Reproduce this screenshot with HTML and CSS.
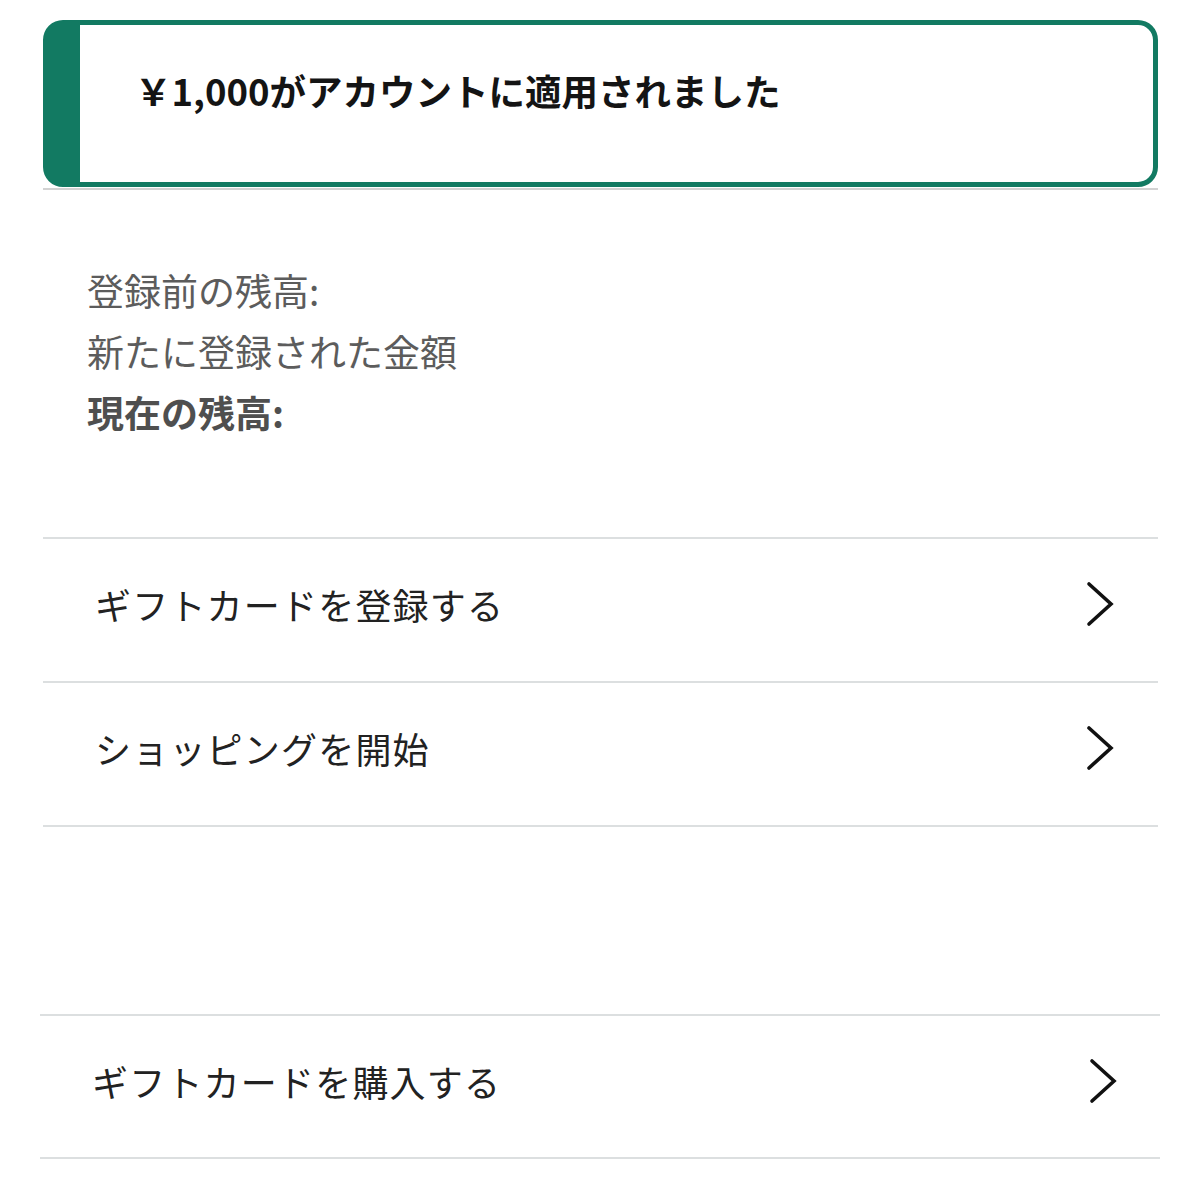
FILE: index.html
```html
<!DOCTYPE html>
<html lang="ja">
<head>
<meta charset="utf-8">
<title>ギフトカード</title>
<link rel="stylesheet" href="styles.css">
</head>
<body>
<div class="page">
  <div class="alert">
    <p class="alert-text">￥1,000がアカウントに適用されました</p>
  </div>
  <div class="rule"></div>

  <div class="balance">
    <p class="bal-line">登録前の残高:</p>
    <p class="bal-line">新たに登録された金額</p>
    <p class="bal-line bal-strong">現在の残高:</p>
  </div>

  <div class="list">
    <div class="row">
      <span class="row-label">ギフトカードを登録する</span>
      <svg class="chev" width="28" height="46" viewBox="0 0 28 46"><polyline points="3,3 25,23 3,43" fill="none" stroke="#111" stroke-width="3.6" stroke-linecap="round" stroke-linejoin="miter"/></svg>
    </div>
    <div class="row">
      <span class="row-label">ショッピングを開始</span>
      <svg class="chev" width="28" height="46" viewBox="0 0 28 46"><polyline points="3,3 25,23 3,43" fill="none" stroke="#111" stroke-width="3.6" stroke-linecap="round" stroke-linejoin="miter"/></svg>
    </div>
  </div>
</div>

<div class="list list-wide">
  <div class="row row-wide">
    <span class="row-label">ギフトカードを購入する</span>
    <svg class="chev" width="28" height="46" viewBox="0 0 28 46"><polyline points="3,3 25,23 3,43" fill="none" stroke="#111" stroke-width="3.6" stroke-linecap="round" stroke-linejoin="miter"/></svg>
  </div>
</div>
</body>
</html>
```

FILE: styles.css
```css
html, body {
  margin: 0;
  padding: 0;
  background: #ffffff;
}
body {
  font-family: "Noto Sans CJK JP", "Noto Sans", sans-serif;
  color: #111;
}
p { margin: 0; }

.page {
  margin: 20px 42px 0 43px;
}

.alert {
  box-sizing: border-box;
  height: 167px;
  border: 5px solid #127a62;
  border-left-width: 37px;
  border-radius: 20px;
  padding: 42px 0 0 58px;
}
.alert-text {
  font-size: 36.5px;
  font-weight: 600;
  line-height: 48px;
  color: #141414;
  margin-left: -3px;
}

.rule {
  height: 2px;
  background: #d2d2d2;
  margin-top: 1px;
}

.balance {
  padding: 70px 0 94px 44px;
}
.bal-line {
  font-size: 37px;
  line-height: 61px;
  color: #5c5c5c;
}
.bal-strong {
  font-weight: 700;
  color: #4f4f4f;
}

.list {
  border-top: 2px solid #dcdfe0;
}
.row {
  box-sizing: border-box;
  height: 144px;
  border-bottom: 2px solid #dcdfe0;
  display: flex;
  align-items: center;
  justify-content: space-between;
  padding: 0 44px 12px 52px;
}
.row-label {
  font-size: 36px;
  color: #222;
  letter-spacing: 1.2px;
}
.chev {
  display: block;
}

.list-wide {
  margin: 187px 40px 0 40px;
}
.row-wide {
  height: 143px;
  padding: 0 43px 12px 52px;
}
```
